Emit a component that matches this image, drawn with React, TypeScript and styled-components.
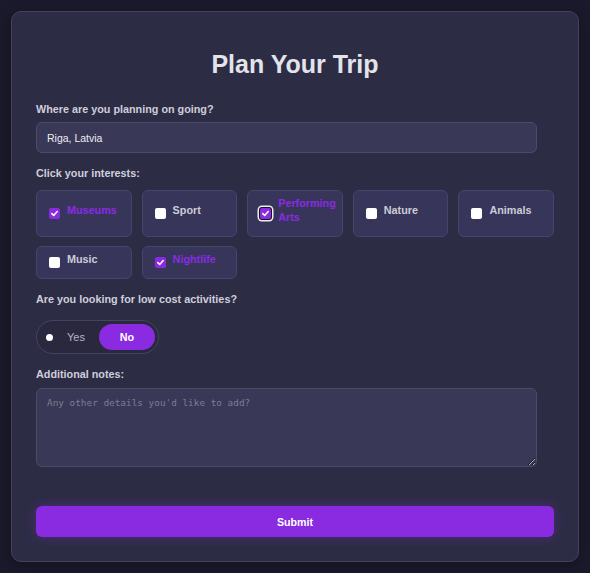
import React from "react";
import styled, { createGlobalStyle } from "styled-components";

const Global = createGlobalStyle`
  html, body { margin: 0; padding: 0; background: #1b1a2c; }
  body { font-family: "Liberation Sans", Arial, sans-serif; }
  * { box-sizing: border-box; }
`;

const Page = styled.div`
  padding: 11px;
  min-height: 573px;
`;

const Card = styled.form`
  display: flex;
  flex-direction: column;
  background: #2d2c45;
  border: 1px solid #42415c;
  border-radius: 10px;
  padding: 24px;
  box-shadow: 0 4px 16px rgba(0, 0, 0, 0.3);
`;

const Title = styled.h1`
  margin: 14px 0 23px;
  font-size: 25px;
  line-height: 29px;
  font-weight: 700;
  color: #e3e3ea;
  text-align: center;
`;

const Group = styled.div<{ $mb: number }>`
  display: flex;
  flex-direction: column;
  margin-bottom: ${(p) => p.$mb}px;
`;

const Label = styled.label<{ $gap: number }>`
  font-size: 10.8px;
  font-weight: 700;
  line-height: 15px;
  color: #cfcedb;
  margin-bottom: ${(p) => p.$gap}px;
`;

const TextInput = styled.input`
  width: 100%;
  max-width: 501px;
  height: 31px;
  padding: 0 10px;
  background: #393857;
  border: 1px solid #4b4a69;
  border-radius: 6px;
  color: #ececf2;
  font-family: "Liberation Sans", Arial, sans-serif;
  font-size: 10.5px;
  outline: none;
`;

const Grid = styled.div`
  display: grid;
  grid-template-columns: repeat(5, 1fr);
  column-gap: 10px;
  row-gap: 9px;
`;

const Chip = styled.label<{ $checked: boolean }>`
  display: flex;
  align-items: center;
  gap: 7px;
  padding: 5px 5px 5px 12px;
  background: #37365a;
  border: 1px solid #46456a;
  border-radius: 6px;
  color: ${(p) => (p.$checked ? "#8a2be2" : "#cdccd8")};
  font-size: 10.8px;
  font-weight: 700;
  line-height: 14px;
`;

const ChipText = styled.span`
  padding-bottom: 7px;
`;

const Box = styled.span<{ $checked: boolean; $focus?: boolean }>`
  flex: none;
  width: 11px;
  height: 11px;
  border-radius: 2px;
  background: ${(p) => (p.$checked ? "#8a2be2" : "#ffffff")};
  display: flex;
  align-items: center;
  justify-content: center;
  box-shadow: ${(p) => (p.$focus ? "0 0 0 1px #15141f, 0 0 0 2.5px #ececf2" : "none")};
`;

const Toggle = styled.div`
  align-self: flex-start;
  display: flex;
  align-items: center;
  width: 123px;
  height: 34px;
  padding: 3px;
  background: #29283f;
  border: 1px solid #45445f;
  border-radius: 999px;
`;

const YesOption = styled.span`
  flex: 1;
  display: flex;
  align-items: center;
  gap: 14px;
  padding-left: 6px;
  color: #b5b4c4;
  font-size: 11px;
`;

const Dot = styled.span`
  width: 7px;
  height: 7px;
  border-radius: 50%;
  background: #ffffff;
`;

const NoPill = styled.span`
  width: 56px;
  height: 100%;
  border-radius: 999px;
  background: #8a2be2;
  color: #ffffff;
  font-weight: 700;
  font-size: 10.8px;
  display: flex;
  align-items: center;
  justify-content: center;
`;

const Notes = styled.textarea`
  width: 100%;
  max-width: 501px;
  height: 79px;
  padding: 8px 10px;
  background: #393857;
  border: 1px solid #4b4a69;
  border-radius: 6px;
  color: #ececf2;
  font-family: "DejaVu Sans Mono", monospace;
  font-size: 9.4px;
  line-height: 12px;
  color-scheme: dark;
  outline: none;
  &::placeholder {
    color: #7e7d93;
  }
`;

const Submit = styled.button`
  width: 100%;
  height: 31px;
  border: none;
  border-radius: 6px;
  background: #8a2be2;
  color: #ffffff;
  font-family: "Liberation Sans", Arial, sans-serif;
  font-size: 10.6px;
  font-weight: 700;
  box-shadow: 0 0 12px rgba(138, 43, 226, 0.35);
  cursor: pointer;
`;

const Check = () => (
  <svg width="9" height="9" viewBox="0 0 9 9">
    <polyline points="1.8,4.6 3.7,6.4 7.2,2.6" fill="none" stroke="#fff" strokeWidth="1.5" strokeLinecap="round" strokeLinejoin="round" />
  </svg>
);

const interests = [
  { name: "Museums", checked: true },
  { name: "Sport", checked: false },
  { name: "Performing Arts", checked: true, focus: true },
  { name: "Nature", checked: false },
  { name: "Animals", checked: false },
  { name: "Music", checked: false },
  { name: "Nightlife", checked: true },
];

export default function App() {
  return (
    <>
      <Global />
      <Page>
        <Card onSubmit={(e) => e.preventDefault()}>
          <Title>Plan Your Trip</Title>
          <Group $mb={13}>
            <Label $gap={5}>Where are you planning on going?</Label>
            <TextInput defaultValue="Riga, Latvia" />
          </Group>
          <Group $mb={13}>
            <Label $gap={9}>Click your interests:</Label>
            <Grid>
              {interests.map((it) => (
                <Chip key={it.name} $checked={it.checked}>
                  <Box $checked={it.checked} $focus={it.focus}>
                    {it.checked && <Check />}
                  </Box>
                  <ChipText>{it.name}</ChipText>
                </Chip>
              ))}
            </Grid>
          </Group>
          <Group $mb={13}>
            <Label $gap={13}>Are you looking for low cost activities?</Label>
            <Toggle>
              <YesOption>
                <Dot />
                Yes
              </YesOption>
              <NoPill>No</NoPill>
            </Toggle>
          </Group>
          <Group $mb={39}>
            <Label $gap={6}>Additional notes:</Label>
            <Notes placeholder="Any other details you'd like to add?" />
          </Group>
          <Submit type="submit">Submit</Submit>
        </Card>
      </Page>
    </>
  );
}
